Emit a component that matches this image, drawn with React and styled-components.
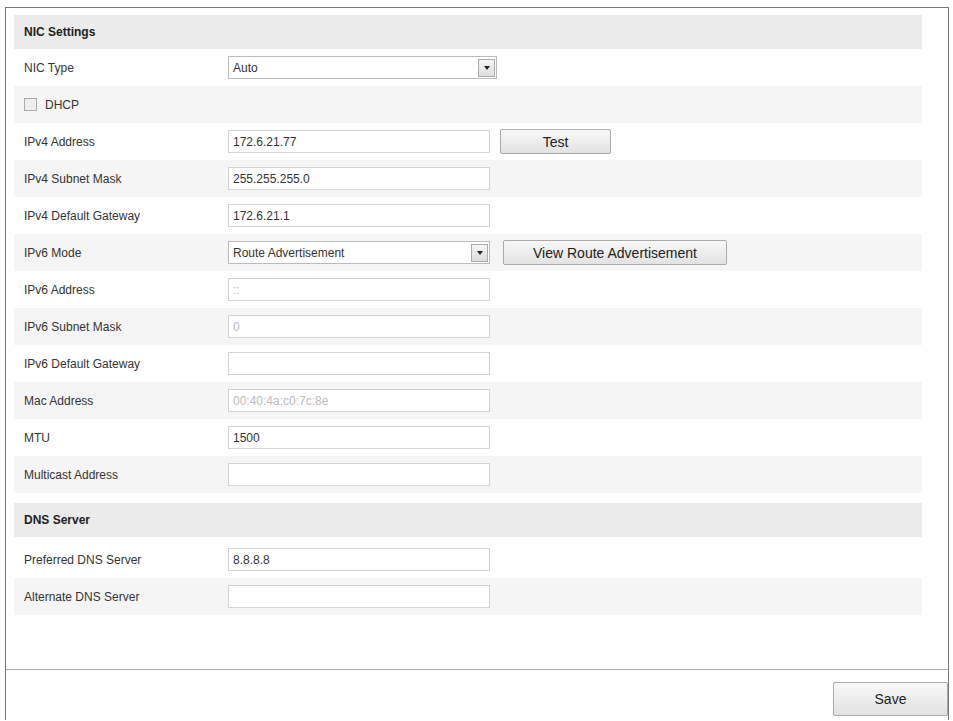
import styled, { createGlobalStyle } from 'styled-components';

const GlobalStyle = createGlobalStyle`
  html, body { margin: 0; padding: 0; background: #fff; }
  body { font-family: "Liberation Sans", Arial, sans-serif; font-size: 12px; color: #333; }
`;

const Frame = styled.div`
  margin: 7px 4px 0 5px;
  height: 713px;
  border: 1px solid #777;
  border-bottom: none;
  display: flex;
  flex-direction: column;
  box-sizing: border-box;
`;

const Panel = styled.div`
  height: 662px;
  border-bottom: 1px solid #aaa;
  padding: 7px 26px 0 8px;
  box-sizing: border-box;
`;

const SectionHeader = styled.div`
  height: 34px;
  background: #ebebeb;
  display: flex;
  align-items: center;
  padding-left: 10px;
  font-weight: bold;
  font-size: 12px;
  color: #222;
  margin-top: ${(p) => p.$top || 0}px;
  margin-bottom: ${(p) => p.$bottom || 0}px;
`;

const Row = styled.div`
  height: 37px;
  display: flex;
  align-items: center;
  background: ${(p) => (p.$alt ? '#f5f5f5' : '#fff')};
`;

const Label = styled.div`
  width: 204px;
  padding-left: 10px;
  flex-shrink: 0;
  display: flex;
  align-items: center;
  gap: 8px;
`;

const Input = styled.div`
  width: 262px;
  height: 23px;
  border: 1px solid #d2d2d2;
  background: #fff;
  box-sizing: border-box;
  padding-left: 4px;
  display: flex;
  align-items: center;
  color: ${(p) => (p.$disabled ? '#bbb' : '#333')};
  font-size: 12px;
`;

const Select = styled(Input)`
  width: ${(p) => p.$w || 269}px;
  justify-content: space-between;
  padding-right: 1px;
  border-color: #bbb;
`;

const Arrow = styled.div`
  width: 17px;
  height: 18px;
  border: 1px solid #aaa;
  background: linear-gradient(#f5f5f5, #ddd);
  box-sizing: border-box;
  display: flex;
  align-items: center;
  justify-content: center;
  &::after {
    content: '';
    border-left: 3px solid transparent;
    border-right: 3px solid transparent;
    border-top: 4px solid #222;
  }
`;

const Button = styled.div`
  margin-left: ${(p) => p.$ml || 10}px;
  width: ${(p) => p.$w}px;
  height: 25px;
  border: 1px solid #aaa;
  border-radius: 2px;
  background: linear-gradient(#f8f8f8, #e2e2e2);
  display: flex;
  align-items: center;
  justify-content: center;
  font-size: 14px;
  color: #222;
  box-sizing: border-box;
`;

const Check = styled.span`
  width: 11px;
  height: 11px;
  border: 1px solid #aaa;
  background: #eee;
`;

const Footer = styled.div`
  flex: 1;
  display: flex;
  justify-content: flex-end;
  align-items: flex-start;
  padding-top: 12px;
`;

const SaveButton = styled(Button)`
  height: 34px;
  font-size: 14px;
`;

const nicRows = [
  ['IPv4 Address', '172.6.21.77', false, 'test'],
  ['IPv4 Subnet Mask', '255.255.255.0', true],
  ['IPv4 Default Gateway', '172.6.21.1', false],
  ['IPv6 Mode', 'Route Advertisement', true, 'mode'],
  ['IPv6 Address', '::', false, 'dis'],
  ['IPv6 Subnet Mask', '0', true, 'dis'],
  ['IPv6 Default Gateway', '', false],
  ['Mac Address', '00:40:4a:c0:7c:8e', true, 'dis'],
  ['MTU', '1500', false],
  ['Multicast Address', '', true],
];

const App = () => (
  <>
    <GlobalStyle />
    <Frame>
      <Panel>
        <SectionHeader>NIC Settings</SectionHeader>
        <Row>
          <Label>NIC Type</Label>
          <Select>Auto<Arrow /></Select>
        </Row>
        <Row $alt>
          <Label><Check />DHCP</Label>
        </Row>
        {nicRows.map(([label, value, alt, kind]) => (
          <Row key={label} $alt={alt}>
            <Label>{label}</Label>
            {kind === 'mode' ? (
              <>
                <Select $w={262}>{value}<Arrow /></Select>
                <Button $w={224} $ml={13}>View Route Advertisement</Button>
              </>
            ) : (
              <Input $disabled={kind === 'dis'}>{value}</Input>
            )}
            {kind === 'test' && <Button $w={111}>Test</Button>}
          </Row>
        ))}
        <SectionHeader $top={10} $bottom={4}>DNS Server</SectionHeader>
        <Row>
          <Label>Preferred DNS Server</Label>
          <Input>8.8.8.8</Input>
        </Row>
        <Row $alt>
          <Label>Alternate DNS Server</Label>
          <Input />
        </Row>
      </Panel>
      <Footer>
        <SaveButton $w={115}>Save</SaveButton>
      </Footer>
    </Frame>
  </>
);

export default App;
